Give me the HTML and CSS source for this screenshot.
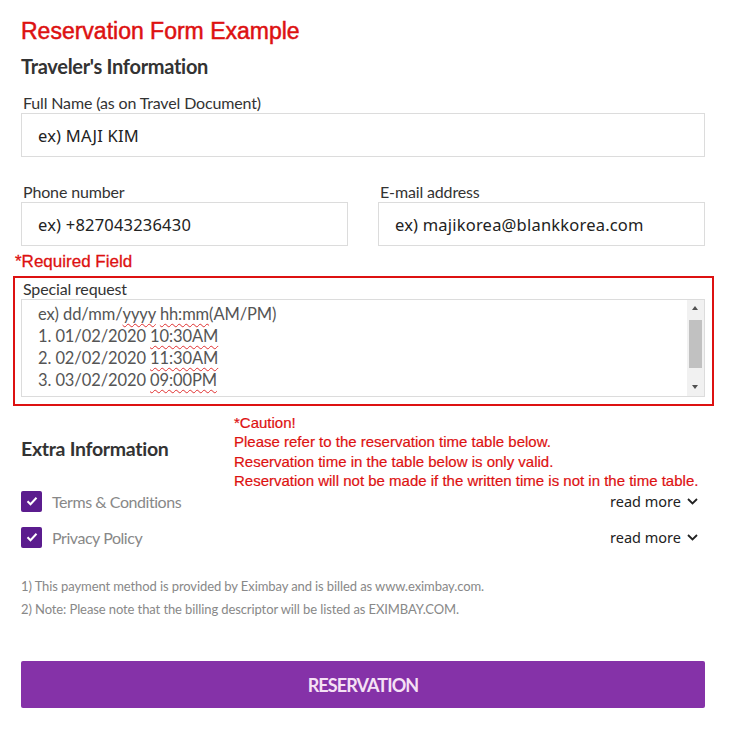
FILE: index.html
```html
<!doctype html>
<html>
<head>
<meta charset=utf-8>
<title>Reservation Form Example</title>
<link rel="stylesheet" href="styles.css">
</head>
<body>

<main class="form">
  <h1 class="title">Reservation Form Example</h1>
  <h2 class="section-title">Traveler's Information</h2>

  <div class="field">
    <label>Full Name (as on Travel Document)</label>
    <div class="input">ex) MAJI KIM</div>
  </div>

  <div class="row">
    <div class="field">
      <label>Phone number</label>
      <div class="input">ex) +827043236430</div>
    </div>
    <div class="field">
      <label>E-mail address</label>
      <div class="input">ex) majikorea@blankkorea.com</div>
    </div>
  </div>

  <p class="required">*Required Field</p>

  <div class="highlight">
    <label>Special request</label>
    <div class="textarea">
      <div class="textarea-text">
        <div>ex) dd/mm/<span class="typo">yyyy</span> <span class="typo">hh:mm</span>(AM/PM)</div>
        <div>1. 01/02/2020 <span class="typo">10:30AM</span></div>
        <div>2. 02/02/2020 <span class="typo">11:30AM</span></div>
        <div>3. 03/02/2020 <span class="typo">09:00PM</span></div>
      </div>
      <div class="scrollbar">
        <span class="arrow up"></span>
        <span class="thumb"></span>
        <span class="arrow down"></span>
      </div>
    </div>
  </div>

  <div class="extra-head">
    <h2 class="section-title">Extra Information</h2>
    <p class="caution">*Caution!<br>
      Please refer to the reservation time table below.<br>
      Reservation time in the table below is only valid.<br>
      Reservation will not be made if the written time is not in the time table.</p>
  </div>

  <ul class="agree">
    <li>
      <span class="check"><svg width="12" height="10" viewBox="0 0 12 10"><path d="M1.5 5.2l3 3 6-6.5" fill="none" stroke="#fff" stroke-width="2"/></svg></span>
      <span class="agree-label">Terms &amp; Conditions</span>
      <a class="more">read more <svg width="11" height="7" viewBox="0 0 11 7"><path d="M1 1l4.5 4.5L10 1" fill="none" stroke="#222" stroke-width="1.8"/></svg></a>
    </li>
    <li>
      <span class="check"><svg width="12" height="10" viewBox="0 0 12 10"><path d="M1.5 5.2l3 3 6-6.5" fill="none" stroke="#fff" stroke-width="2"/></svg></span>
      <span class="agree-label">Privacy Policy</span>
      <a class="more">read more <svg width="11" height="7" viewBox="0 0 11 7"><path d="M1 1l4.5 4.5L10 1" fill="none" stroke="#222" stroke-width="1.8"/></svg></a>
    </li>
  </ul>

  <div class="notes">
    <p>1) This payment method is provided by Eximbay and is billed as www.eximbay.com.</p>
    <p>2) Note: Please note that the billing descriptor will be listed as EXIMBAY.COM.</p>
  </div>

  <button class="submit">RESERVATION</button>
</main>

</body>
</html>
```

FILE: styles.css
```css
body {
  margin: 0;
  padding: 0;
  background: #fff;
  font-family: Lato, "Noto Sans", sans-serif;
  color: #333;
}

.form {
  width: 684px;
  margin-left: 21px;
  padding-top: 17px;
}

.title {
  font-family: "Liberation Sans", Arial, sans-serif;
  font-weight: normal;
  font-size: 23px;
  line-height: 28px;
  color: #dd1111;
  -webkit-text-stroke: 0.5px #dd1111;
  margin: 0;
}

.section-title {
  font-size: 20px;
  font-weight: bold;
  color: #333;
  margin: 0;
  line-height: 24px;
  letter-spacing: -0.3px;
}

.form > .section-title {
  margin-top: 9px;
}

label {
  display: block;
  font-size: 16px;
  line-height: 20px;
  padding-left: 2px;
  letter-spacing: -0.15px;
  color: #333;
}

.field {
  margin-top: 15px;
}

.input {
  border: 1px solid #dcdcdc;
  box-sizing: border-box;
  height: 44px;
  padding: 0 16px;
  display: flex;
  align-items: center;
  font-family: "Noto Sans", sans-serif;
  font-size: 16.5px;
  color: #222;
  letter-spacing: 0.2px;
}

.row {
  display: flex;
  gap: 30px;
  margin-top: 25px;
}

.row .field {
  flex: 1;
  margin-top: 0;
}

.required {
  font-family: "Liberation Sans", Arial, sans-serif;
  font-size: 17px;
  line-height: 20px;
  color: #dd1111;
  -webkit-text-stroke: 0.3px #dd1111;
  margin: 6px 0 0 -6px;
}

.highlight {
  margin: 4px -9px 0 -8px;
  border: 2px solid #dd1111;
  padding: 1px 7px 7px 6px;
}

.textarea {
  display: flex;
  height: 98px;
  border: 1px solid #dcdcdc;
  box-sizing: border-box;
}

.textarea-text {
  flex: 1;
  padding: 3px 16px 0;
  font-size: 16.5px;
  line-height: 22px;
  color: #555;
  letter-spacing: -0.1px;
}

.typo {
  text-decoration: underline wavy #e03030;
  text-decoration-thickness: 1px;
  text-underline-offset: 3px;
}

.scrollbar {
  width: 17px;
  background: #f1f1f1;
  display: flex;
  flex-direction: column;
  align-items: center;
}

.arrow {
  height: 17px;
  width: 17px;
  position: relative;
}

.arrow::after {
  content: "";
  position: absolute;
  left: 5px;
  top: 6px;
  border-left: 3.5px solid transparent;
  border-right: 3.5px solid transparent;
}

.arrow.up::after {
  border-bottom: 4px solid #505050;
}

.arrow.down::after {
  border-top: 4px solid #505050;
}

.thumb {
  width: 13px;
  flex: 1;
  background: #c1c1c1;
  margin: 3px 0 11px;
}

.extra-head {
  display: flex;
  align-items: center;
  margin-top: 7px;
}

.extra-head .section-title {
  width: 213px;
  font-size: 19.5px;
  letter-spacing: -0.3px;
  padding-top: 1px;
}

.caution {
  font-family: "Liberation Sans", Arial, sans-serif;
  font-size: 15px;
  line-height: 19.3px;
  color: #dd1111;
  -webkit-text-stroke: 0.2px #dd1111;
  margin: 0 0 -7px;
}

.agree {
  list-style: none;
  margin: 0;
  padding: 0;
}

.agree li {
  display: flex;
  align-items: center;
  height: 36px;
}

.check {
  width: 21px;
  height: 21px;
  border-radius: 2px;
  background: #5b1c8e;
  display: flex;
  align-items: center;
  justify-content: center;
  margin-right: 10px;
}

.agree-label {
  flex: 1;
  font-size: 16px;
  color: #888;
  letter-spacing: -0.45px;
}

.more {
  font-family: "Noto Sans", sans-serif;
  font-size: 14.5px;
  color: #222;
  margin-right: 7px;
  display: flex;
  align-items: center;
  gap: 6px;
}

.notes {
  margin-top: 20px;
}

.notes p {
  margin: 0;
  font-size: 13px;
  line-height: 23px;
  color: #888;
  letter-spacing: -0.1px;
}

.submit {
  display: block;
  width: 100%;
  height: 47px;
  margin-top: 40px;
  border: none;
  border-radius: 2px;
  background: #8532a8;
  color: #f5e1f5;
  font-family: Lato, "Noto Sans", sans-serif;
  font-size: 18px;
  font-weight: bold;
  letter-spacing: -0.9px;
}
```
